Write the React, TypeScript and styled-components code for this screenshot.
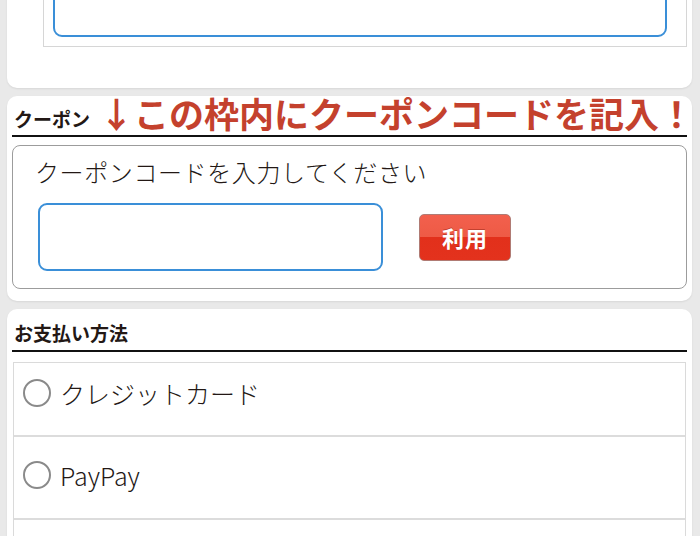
import React from "react";
import styled, { createGlobalStyle } from "styled-components";

const GlobalStyle = createGlobalStyle`
  html, body {
    margin: 0;
    padding: 0;
    background: #e9e9e9;
    font-family: "Noto Sans CJK JP", "Noto Sans", sans-serif;
    color: #231815;
    overflow: hidden;
  }
`;

const Page = styled.div`
  width: 700px;
  margin-top: -58px;
  display: flex;
  flex-direction: column;
  gap: 8px;
`;

const Card = styled.section`
  background: #fff;
  margin: 0 8px 0 7px;
  border-radius: 10px;
  box-shadow: 0 1px 2px rgba(0, 0, 0, 0.08);
`;

const TopCard = styled(Card)`
  padding: 10px 5px 41px 36px;
`;

const InnerBox = styled.div`
  border: 1px solid #d6d6d6;
  padding: 10px 19px 9px 9px;
`;

const WideInput = styled.div`
  height: 70px;
  border: 2px solid #3a8fd8;
  border-radius: 9px;
`;

const SectionCard = styled(Card)<{ $pb?: number }>`
  padding: 0 5px ${(p) => p.$pb ?? 12}px;
`;

const HeaderRow = styled.div`
  display: flex;
  align-items: flex-end;
  gap: 9px;
  padding: 0 0 4px 2px;
  border-bottom: 2px solid #111;
  height: 41px;
  box-sizing: border-box;
  white-space: nowrap;
`;

const HeaderTitle = styled.h3`
  margin: 0;
  font-size: 19px;
  font-weight: 700;
  line-height: 24px;
  color: #231815;
`;

const Annotation = styled.span`
  font-size: 35px;
  font-weight: 700;
  line-height: 40px;
  color: #c4412d;
  margin-bottom: -2px;
`;

const CouponBox = styled.div`
  margin-top: 8px;
  border: 1.5px solid #9c9c9c;
  border-radius: 8px;
  padding: 11px 0 17px 22px;
`;

const CouponLabel = styled.p`
  margin: 0 0 16px;
  font-size: 24px;
  line-height: 30px;
  letter-spacing: 0.6px;
  font-weight: 300;
  color: #231815;
`;

const CouponRow = styled.div`
  display: flex;
  align-items: center;
  gap: 36px;
  padding-left: 3px;
`;

const CodeInput = styled.input`
  width: 345px;
  height: 68px;
  box-sizing: border-box;
  border: 2px solid #3a8fd8;
  border-radius: 9px;
  outline: none;
  font-size: 20px;
  padding: 0 12px;
`;

const UseButton = styled.button`
  width: 92px;
  height: 47px;
  border: 1px solid #b07b74;
  border-radius: 5px;
  background: linear-gradient(#f2604d 0%, #ee5a45 50%, #e2301b 50%, #e3321d 100%);
  color: #fff;
  font-family: "Noto Sans CJK JP", sans-serif;
  font-size: 22px;
  font-weight: 700;
  letter-spacing: 1px;
  padding: 0;
  text-shadow: 0 -1px 0 rgba(120, 20, 10, 0.4);
`;

const PayHeader = styled(HeaderRow)`
  height: 43px;
  padding-bottom: 5px;
`;

const OptionTable = styled.div`
  margin: 10px 1px 0 1px;
  border: 1.5px solid #dadada;
  border-bottom: none;
`;

const OptionRow = styled.label<{ $h: number; $pt: number }>`
  display: flex;
  align-items: flex-start;
  gap: 9px;
  height: ${(p) => p.$h}px;
  box-sizing: border-box;
  padding: ${(p) => p.$pt}px 0 0 9px;
  border-bottom: 2px solid #dcdcdc;
  font-size: 25px;
  font-weight: 300;
  line-height: 30px;
  color: #231815;
`;

const Radio = styled.span`
  width: 28px;
  height: 28px;
  box-sizing: border-box;
  border: 2px solid #8a8a8a;
  border-radius: 50%;
  flex-shrink: 0;
  margin-top: 1px;
`;

export default function App() {
  const options = [
    { label: "クレジットカード", h: 74, pt: 15 },
    { label: "PayPay", h: 83, pt: 23 },
    { label: "", h: 80, pt: 23 },
  ];

  return (
    <>
      <GlobalStyle />
      <Page>
        <TopCard>
          <InnerBox>
            <WideInput />
          </InnerBox>
        </TopCard>

        <SectionCard>
          <HeaderRow>
            <HeaderTitle>クーポン</HeaderTitle>
            <Annotation>↓この枠内にクーポンコードを記入！</Annotation>
          </HeaderRow>
          <CouponBox>
            <CouponLabel>クーポンコードを入力してください</CouponLabel>
            <CouponRow>
              <CodeInput type="text" />
              <UseButton type="button">利用</UseButton>
            </CouponRow>
          </CouponBox>
        </SectionCard>

        <SectionCard $pb={0}>
          <PayHeader>
            <HeaderTitle>お支払い方法</HeaderTitle>
          </PayHeader>
          <OptionTable>
            {options.map((o, i) => (
              <OptionRow key={i} $h={o.h} $pt={o.pt}>
                {o.label && <Radio />}
                {o.label}
              </OptionRow>
            ))}
          </OptionTable>
        </SectionCard>
      </Page>
    </>
  );
}
